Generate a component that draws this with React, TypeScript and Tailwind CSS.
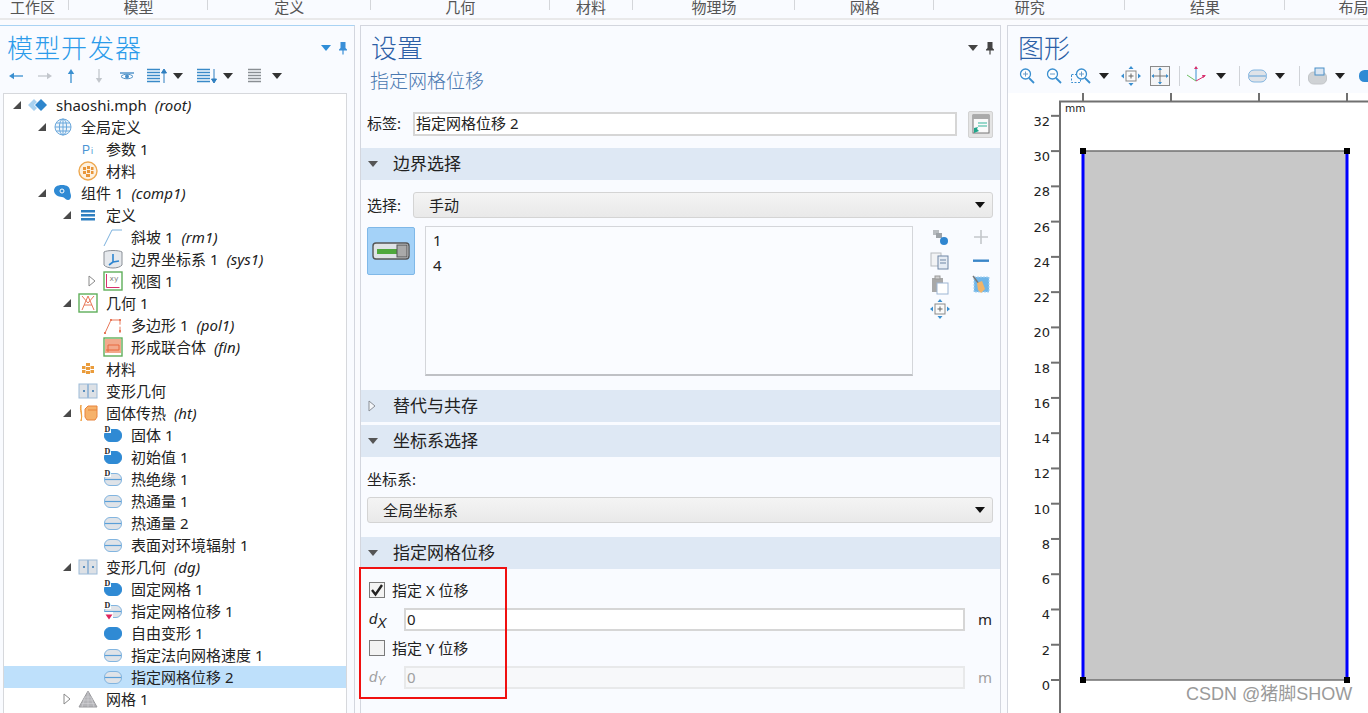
import React from "react";

const sans = "font-['Noto_Sans','Noto_Sans_CJK_SC',sans-serif]";

const Caret = ({ c = "#333", w = 10 }: { c?: string; w?: number }) => (
  <svg width={w} height={6} viewBox="0 0 10 6"><path d="M0 0h10L5 6z" fill={c} /></svg>
);

const Pin = () => (
  <svg width="10" height="14" viewBox="0 0 10 14">
    <path d="M2.5 1h5v6l1.5 1.5v1H1v-1L2.5 7z" fill="currentColor" /><rect x="4.4" y="9" width="1.2" height="4.5" fill="currentColor" />
  </svg>
);

const Tri = ({ open }: { open: boolean }) =>
  open ? (
    <svg width="10" height="10" viewBox="0 0 10 10"><path d="M9 1v8H1z" fill="#4a4a4a" /></svg>
  ) : (
    <svg width="8" height="12" viewBox="0 0 8 12"><path d="M1 1l6 5-6 5z" fill="#fff" stroke="#8a8a8a" /></svg>
  );

const S = ({ children, w = 20, h = 20 }: { children: React.ReactNode; w?: number; h?: number }) => (
  <svg width={w} height={h} viewBox={`0 0 ${w} ${h}`}>{children}</svg>
);

const Pill = ({ fill = "#dfe3e8", line = true, d = false, red = false }: { fill?: string; line?: boolean; d?: boolean; red?: boolean }) => (
  <S>
    <rect x="1.5" y="4.5" width="17" height="12" rx="5.5" fill={fill} stroke={fill === "#dfe3e8" ? "#82b5e0" : fill} />
    {line && <path d="M2 10.5h16" stroke="#5a9fd8" strokeWidth="1.2" />}
    {d && <rect x="1" y="0" width="7" height="8" fill="#fff" />}
    {d && <text x="1.5" y="7" fontSize="8" fontWeight="700" fontFamily="Liberation Serif" fill="#222">D</text>}
    {red && <rect x="1" y="11" width="9" height="9" fill="#fff" />}
    {red && <path d="M2.5 13.5h7l-3.5 5z" fill="#e0245e" />}
  </S>
);

const icons: Record<string, React.ReactNode> = {
  root: (
    <S>
      <path d="M0 10l6-6 3 3-3 3 3 3-3 3z" fill="#a9d2f0" /><path d="M7 10l6-6 6 6-6 6z" fill="#2f86cc" />
    </S>
  ),
  globe: (
    <S>
      <circle cx="10" cy="10" r="8" fill="#eef5fb" stroke="#6ba8dc" />
      <ellipse cx="10" cy="10" rx="3.6" ry="8" fill="none" stroke="#6ba8dc" />
      <path d="M2 10h16M3.2 6h13.6M3.2 14h13.6M10 2v16" stroke="#6ba8dc" fill="none" />
    </S>
  ),
  pi: (
    <S>
      <text x="4" y="15" fontSize="12" fontFamily="Liberation Sans" fill="#4a94d4">P</text>
      <text x="13" y="15" fontSize="9" fontFamily="Liberation Sans" fill="#4a94d4">i</text>
    </S>
  ),
  matCircle: (
    <S>
      <circle cx="10" cy="10" r="9" fill="#fdf1e0" stroke="#eea850" strokeWidth="1.4" />
      <path d="M5 6h3v3H5zM9 5h3v3H9zM13 6h2.5v3H13zM5 10h3v3H5zM9 9h3v3H9zM13 10h2.5v3H13zM8 13h4v3H8z" fill="#e8963a" />
    </S>
  ),
  comp: (
    <S>
      <path d="M1 8c0-4 3-6 8-6s8 2 8 6c0 2 1 3 1 5s-1 4-3 4c-3 0-3-3-6-3-4 0-8-3-8-6z" fill="#2f8ad4" />
      <circle cx="9" cy="8" r="2" fill="none" stroke="#fff" />
    </S>
  ),
  defs: (
    <S>
      <path d="M3 5h14v2.6H3zM3 9h14v2.6H3zM3 13h14v2.6H3z" fill="#2f7fc0" />
    </S>
  ),
  ramp: (
    <S>
      <path d="M1 19L9 3h10" stroke="#7cb1dd" fill="none" />
    </S>
  ),
  sys: (
    <S>
      <path d="M1 3c3-2 15-2 18 0v13c-3 4-15 4-18 0z" fill="#e6e9ed" stroke="#8a8f96" />
      <path d="M10 5v8M10 13l-4 3M10 13l6-1" stroke="#2f86d0" strokeWidth="1.6" fill="none" />
    </S>
  ),
  view: (
    <S>
      <rect x="1" y="1" width="18" height="18" fill="#fff" stroke="#5fae5a" strokeWidth="1.4" />
      <text x="6.5" y="10" fontSize="7.5" fontFamily="DejaVu Sans" fill="#888">xy</text>
      <path d="M3.5 3v13.5h13" stroke="#d8306e" fill="none" />
    </S>
  ),
  geom: (
    <S>
      <rect x="1" y="1" width="18" height="18" fill="#fff" stroke="#5fae5a" strokeWidth="1.4" />
      <path d="M4 17L10 3l6 14M6 12h8M4 3l6 7 6-7" stroke="#e8785a" fill="none" />
    </S>
  ),
  poly: (
    <S>
      <path d="M2 18L8 5h9v13" stroke="#e8785a" strokeDasharray="13 2" fill="none" />
      <path d="M1 17h2v2H1zM7 4h2v2H7zM16 4h2v2h-2zM16 15h2v2h-2z" fill="#e8785a" />
    </S>
  ),
  union: (
    <S>
      <rect x="1" y="1" width="18" height="18" fill="#fff" stroke="#5fae5a" strokeWidth="1.4" />
      <rect x="2" y="2" width="16" height="14" fill="#f2a98c" />
      <path d="M5 15V8h11v5H3" stroke="#e8683f" fill="none" />
    </S>
  ),
  mat: (
    <S>
      <path d="M8 4h4v3H8zM4 7h3.5v3H4zM12.5 7H16v3h-3.5zM8 8h4v3H8zM4 11h3.5v3H4zM12.5 11H16v3h-3.5zM8 12h4v3H8z" fill="#ea9c3c" />
    </S>
  ),
  deform: (
    <S>
      <rect x="1" y="3" width="8.5" height="14" fill="#dde1e6" stroke="#9dbbd8" />
      <rect x="10.5" y="3" width="8.5" height="14" fill="#dde1e6" stroke="#9dbbd8" />
      <path d="M5 9h2v2H5zM14 9h2v2h-2z" fill="#5c8fbd" />
    </S>
  ),
  ht: (
    <S>
      <path d="M3 2c-2 5 2 10 0 16M3 2c-.5 6 1.8 10 0 16" stroke="#f0a040" fill="none" />
      <path d="M7 6l3-3h9v11l-2 3H9l-2-3z" fill="#f6b26b" stroke="#e8843c" />
      <path d="M10 7h9" stroke="#e8843c" />
    </S>
  ),
  dfill: <Pill fill="#2f8ad4" line={false} d />,
  dline: <Pill d />,
  line: <Pill />,
  dred: <Pill d red />,
  fill: <Pill fill="#2f8ad4" line={false} />,
  mesh: (
    <S>
      <path d="M10 2l9 16H1z" fill="#b4b4b8" stroke="#9a9a9e" />
      <path d="M7 8l6 0M5 11h10M3.5 14.5h13M10 2v16M7 8l-3 10M13 8l3 10" stroke="#d8d8dc" strokeWidth=".5" fill="none" />
    </S>
  ),
};

type Row = { l: number; t?: "o" | "c"; i: string; n: string; s?: string; sel?: boolean };
const rows: Row[] = [
  { l: 0, t: "o", i: "root", n: "shaoshi.mph", s: "(root)" },
  { l: 1, t: "o", i: "globe", n: "全局定义" },
  { l: 2, i: "pi", n: "参数 1" },
  { l: 2, i: "matCircle", n: "材料" },
  { l: 1, t: "o", i: "comp", n: "组件 1", s: "(comp1)" },
  { l: 2, t: "o", i: "defs", n: "定义" },
  { l: 3, i: "ramp", n: "斜坡 1", s: "(rm1)" },
  { l: 3, i: "sys", n: "边界坐标系 1", s: "(sys1)" },
  { l: 3, t: "c", i: "view", n: "视图 1" },
  { l: 2, t: "o", i: "geom", n: "几何 1" },
  { l: 3, i: "poly", n: "多边形 1", s: "(pol1)" },
  { l: 3, i: "union", n: "形成联合体", s: "(fin)" },
  { l: 2, i: "mat", n: "材料" },
  { l: 2, i: "deform", n: "变形几何" },
  { l: 2, t: "o", i: "ht", n: "固体传热", s: "(ht)" },
  { l: 3, i: "dfill", n: "固体 1" },
  { l: 3, i: "dfill", n: "初始值 1" },
  { l: 3, i: "dline", n: "热绝缘 1" },
  { l: 3, i: "line", n: "热通量 1" },
  { l: 3, i: "line", n: "热通量 2" },
  { l: 3, i: "line", n: "表面对环境辐射 1" },
  { l: 2, t: "o", i: "deform", n: "变形几何", s: "(dg)" },
  { l: 3, i: "dfill", n: "固定网格 1" },
  { l: 3, i: "dred", n: "指定网格位移 1" },
  { l: 3, i: "fill", n: "自由变形 1" },
  { l: 3, i: "line", n: "指定法向网格速度 1" },
  { l: 3, i: "line", n: "指定网格位移 2", sel: true },
  { l: 2, t: "c", i: "mesh", n: "网格 1" },
];

const indent = ["pl-[3px]", "pl-[28px]", "pl-[53px]", "pl-[78px]"];

const TreeRow = ({ r }: { r: Row }) => (
  <div className={`flex items-center h-[22px] shrink-0 text-[15px] text-[#222] whitespace-nowrap ${indent[r.l]} ${r.sel ? "bg-[#bee0fb]" : ""}`}>
    <span className="w-[20px] flex justify-center pr-[1px]">{r.t && <Tri open={r.t === "o"} />}</span>
    <span className="w-[29px] flex pl-[1px]">{icons[r.i]}</span>
    <span>{r.n}</span>
    {r.s && <span className="italic ml-[8px]">{r.s}</span>}
  </div>
);

const Arrow = ({ dir, c }: { dir: "l" | "r" | "u" | "d"; c: string }) => {
  const rot = { l: 180, r: 0, u: -90, d: 90 }[dir];
  return (
    <svg width="16" height="16" viewBox="0 0 16 16">
      <g transform={`rotate(${rot} 8 8)`}>
        <path d="M1 8h12" stroke={c} strokeWidth="1.3" /><path d="M15 8l-5-3.2v6.4z" fill={c} />
      </g>
    </svg>
  );
};

const ListIcon = ({ arrow }: { arrow?: "u" | "d" }) => (
  <svg width="21" height="16" viewBox="0 0 21 16">
    <path d="M1 1.5h13M1 4.5h13M1 7.5h13M1 10.5h13M1 13.5h13" stroke={arrow ? "#3a8ac8" : "#8a8f94"} strokeWidth="1.4" />
    {arrow === "u" && <path d="M18 15V4M15.5 5L18 1l2.5 4z" stroke="#2f7fc0" fill="#2f7fc0" />}
    {arrow === "d" && <path d="M18 1v11M15.5 11l2.5 4 2.5-4z" stroke="#2f7fc0" fill="#2f7fc0" />}
  </svg>
);

const Left = () => (
  <div className="w-[355px] h-full flex flex-col bg-[#f9fbff] border-t border-t-[#a9d3f3] border-r border-r-[#d3d6de]">
    <div className="h-[44px] flex items-center justify-between pl-[7px] pr-[6px] shrink-0">
      <span className="text-[26px] font-light tracking-[1px] text-[#2c9bea]">模型开发器</span>
      <span className="flex items-center gap-[7px] text-[#3a8fd8]"><Caret c="#2f8ed8" /><Pin /></span>
    </div>
    <div className="h-[24px] mt-[-6px] flex items-center pl-[8px] shrink-0">
      <Arrow dir="l" c="#3a8fd0" />
      <span className="ml-[13px]"><Arrow dir="r" c="#c2c6cc" /></span>
      <span className="ml-[10px]"><Arrow dir="u" c="#3a8fd0" /></span>
      <span className="ml-[12px]"><Arrow dir="d" c="#c2c6cc" /></span>
      <span className="ml-[12px]">
        <svg width="16" height="12" viewBox="0 0 16 12"><path d="M1 3h14" stroke="#4a8fc8" strokeWidth="1.4" /><path d="M2 6.5c2-3 10-3 12 0-2 3-10 3-12 0z" fill="#fff" stroke="#4a8fc8" /><circle cx="8" cy="6.5" r="2" fill="#4a8fc8" /></svg>
      </span>
      <span className="ml-[11px]"><ListIcon arrow="u" /></span>
      <span className="ml-[6px]"><Caret /></span>
      <span className="ml-[13px]"><ListIcon arrow="d" /></span>
      <span className="ml-[6px]"><Caret /></span>
      <span className="ml-[14px]"><ListIcon /></span>
      <span className="ml-[4px]"><Caret /></span>
    </div>
    <div className="ml-[3px] mr-[7px] mt-[5px] flex-1 min-h-0 flex flex-col bg-white border border-[#d6d8dc] border-b-0 overflow-hidden">
      {rows.map((r, i) => <TreeRow key={i} r={r} />)}
    </div>
  </div>
);

const Section = ({ title, open = true }: { title: string; open?: boolean }) => (
  <div className="h-[32px] shrink-0 flex items-center bg-[#dee8f4] text-[17px] text-[#222]">
    <span className="w-[32px] pl-[7px] flex">
      {open ? <Caret c="#555" /> : <svg width="8" height="12" viewBox="0 0 8 12"><path d="M1 1l6 5-6 5z" fill="#f4f6f9" stroke="#8a8f96" /></svg>}
    </span>
    <span>{title}</span>
  </div>
);

const Dropdown = ({ text, cls }: { text: string; cls: string }) => (
  <div className={`h-[26px] flex items-center justify-between rounded-[3px] border border-[#d4d4d4] bg-gradient-to-b from-[#f4f4f4] to-[#e9e9e9] text-[15px] text-[#222] pr-[7px] ${cls}`}>
    <span>{text}</span><Caret c="#111" />
  </div>
);

const BoundaryBtn = () => (
  <div className="w-[48px] h-[48px] shrink-0 flex items-center justify-center rounded-[2px] bg-[#a4d2f8] border border-[#7fb8e8]">
    <svg width="38" height="20" viewBox="0 0 38 20">
      <rect x="1" y="2" width="36" height="16" rx="3" fill="#dfe3e6" stroke="#555" strokeWidth="1.4" />
      <rect x="5" y="8" width="20" height="5" fill="#4fa83d" />
      <rect x="25" y="4" width="10" height="12" fill="#a9a9a9" stroke="#555" />
    </svg>
  </div>
);

const SideIcons = () => (
  <div className="grid grid-cols-[24px_24px] gap-x-[17px] ml-[15px] mt-[-1px] content-start">
    <div className="h-[24px] flex items-center justify-center">
      <S w={18} h={18}><path d="M2 2h6v5H2z" fill="#b8bcc0" /><path d="M5 5h6v5H5z" fill="#9ea3a8" /><circle cx="13" cy="13" r="4" fill="#2f86d0" /></S>
    </div>
    <div className="h-[24px] flex items-center justify-center">
      <S w={16} h={16}><path d="M8 1v14M1 8h14" stroke="#c4c7cb" strokeWidth="1.6" /></S>
    </div>
    <div className="h-[24px] flex items-center justify-center">
      <S w={20} h={18}><rect x="1" y="1" width="10" height="13" fill="#f2f3f5" stroke="#b8bcc0" /><rect x="8" y="4" width="10" height="13" fill="#e6ecf4" stroke="#6f86a5" /><path d="M10 8h6M10 11h6" stroke="#6f86a5" /></S>
    </div>
    <div className="h-[24px] flex items-center justify-center">
      <S w={16} h={6}><rect x="0" y="1.5" width="16" height="2.4" fill="#3a86c8" /></S>
    </div>
    <div className="h-[24px] flex items-center justify-center">
      <S w={18} h={20}><rect x="1" y="3" width="11" height="14" fill="#a8a8a8" /><rect x="4" y="1" width="5" height="3" fill="#d0d0d0" stroke="#999" /><rect x="6" y="8" width="11" height="11" fill="#fff" stroke="#9db6d4" /></S>
    </div>
    <div className="h-[24px] flex items-center justify-center">
      <S w={18} h={20}><rect x="2" y="2" width="15" height="15" fill="#6fb5e8" stroke="#a8d2f0" strokeDasharray="2 1" /><path d="M1 1l6 8" stroke="#777" strokeWidth="1.4" /><path d="M5 8l5-2 3 8-4 4-3-3z" fill="#f2b468" /></S>
    </div>
    <div className="h-[24px] flex items-center justify-center">
      <MoveIcon />
    </div>
    <div />
  </div>
);

const MoveIcon = () => (
  <S w={20} h={20}>
    <rect x="5" y="5" width="10" height="10" fill="#fafafa" stroke="#8a8a8a" />
    <path d="M10 7.5v5M7.5 10h5" stroke="#666" />
    <path d="M10 0l2.5 3h-5zM10 20l2.5-3h-5zM0 10l3-2.5v5zM20 10l-3-2.5v5z" fill="#3a8fd0" />
  </S>
);

const Field = ({ v, disabled }: { v: string; disabled?: boolean }) => (
  <div className={`w-[561px] h-[23px] flex items-center pl-[1px] text-[15px] border-2 ${disabled ? "bg-[#f7f8fa] border-[#e8e9ea] text-[#a0a0a0]" : "bg-white border-[#d6d6d6] text-[#222]"}`}>{v}</div>
);

const Check = ({ on }: { on?: boolean }) => (
  <span className="w-[16px] h-[16px] bg-[#f3f3f3] border border-[#7a7a7a] flex items-center justify-center">
    {on && <svg width="14" height="14" viewBox="0 0 14 14"><path d="M2 7l3.5 4.5L12 2" fill="none" stroke="#222" strokeWidth="2.4" /></svg>}
  </span>
);

const Center = () => (
  <div className="relative w-[641px] h-full ml-[5px] flex flex-col bg-[#f9fbff] border-t border-t-[#d3d6de] border-x border-x-[#d3d6de]">
    <div className="h-[44px] flex items-center justify-between pl-[10px] pr-[5px] shrink-0">
      <span className="text-[26px] font-light text-[#2c5fa6]">设置</span>
      <span className="flex items-center gap-[7px] text-[#444]"><Caret c="#444" /><Pin /></span>
    </div>
    <div className="h-[22px] flex items-center pl-[9px] text-[19px] font-light text-[#4a78b0] shrink-0">指定网格位移</div>
    <div className="h-[28px] mt-[18px] flex items-center shrink-0 pl-[6px] text-[15px] text-[#222]">
      <span className="w-[46px] mt-[-2px]">标签:</span>
      <div className="w-[544px] h-[24px] flex items-center pl-[1px] bg-white border-2 border-[#d6d6d6]"><span className="mt-[-2px]">指定网格位移 2</span></div>
      <div className="ml-[11px] w-[25px] h-[27px] flex items-center justify-center rounded-[2px] bg-[#e4e4e4] border border-[#d2d2d2]">
        <svg width="18" height="20" viewBox="0 0 18 20"><rect x="1" y="1" width="16" height="18" fill="#fafafa" stroke="#777" /><rect x="1" y="1" width="16" height="4" fill="#aaa" /><path d="M6 9h9M6 12h9" stroke="#35b59a" /><path d="M2 19v-5l4-1-1 2 2 2z" fill="#1fa58a" /></svg>
      </div>
    </div>
    <div className="mt-[10px]"><Section title="边界选择" /></div>
    <div className="h-[26px] mt-[12px] flex items-center shrink-0 pl-[6px] text-[15px] text-[#222]">
      <span className="w-[46px]">选择:</span>
      <Dropdown text="手动" cls="w-[580px] pl-[15px]" />
    </div>
    <div className="h-[150px] mt-[8px] flex shrink-0 pl-[6px]">
      <div className="pt-[1px]"><BoundaryBtn /></div>
      <div className="ml-[10px] w-[488px] h-[150px] bg-[#fafcff] border border-[#d4d6da] border-b-2 border-b-[#bfc1c5] pl-[7px] pt-[1px] text-[15px] text-[#222] leading-[25px]">
        <div>1</div>
        <div>4</div>
      </div>
      <SideIcons />
    </div>
    <div className="mt-[14px]"><Section title="替代与共存" open={false} /></div>
    <div className="mt-[3px]"><Section title="坐标系选择" /></div>
    <div className="h-[18px] mt-[13px] mb-[1px] flex items-center pl-[6px] text-[15px] text-[#222] shrink-0">坐标系:</div>
    <div className="mt-[8px] pl-[6px] shrink-0">
      <Dropdown text="全局坐标系" cls="w-[626px] pl-[15px]" />
    </div>
    <div className="mt-[14px]"><Section title="指定网格位移" /></div>
    <div className="h-[20px] mt-[11px] flex items-center gap-[7px] pl-[8px] text-[15px] text-[#222] shrink-0"><Check on /><span>指定 X 位移</span></div>
    <div className="h-[23px] mt-[8px] flex items-center pl-[8px] text-[15px] text-[#222] shrink-0">
      <span className="w-[35px] italic text-[15px] font-['Liberation_Sans',sans-serif]">d<sub className="text-[14px]">X</sub></span>
      <Field v="0" />
      <span className="ml-[13px]">m</span>
    </div>
    <div className="h-[20px] mt-[7px] flex items-center gap-[7px] pl-[8px] text-[15px] text-[#222] shrink-0"><Check /><span>指定 Y 位移</span></div>
    <div className="h-[23px] mt-[8px] flex items-center pl-[8px] text-[15px] text-[#a0a0a0] shrink-0">
      <span className="w-[35px] italic text-[15px] font-['Liberation_Sans',sans-serif]">d<sub className="text-[12px]">Y</sub></span>
      <Field v="0" disabled />
      <span className="ml-[13px]">m</span>
    </div>
    <div className="absolute left-[-2px] top-[541px] w-[148px] h-[132px] border-[2.5px] border-[#f01010]" />
  </div>
);

const Zoom = ({ sign, box }: { sign: string; box?: boolean }) => (
  <svg width={box ? 20 : 16} height="16" viewBox={box ? "-4 0 20 16" : "0 0 16 16"}>
    {box && <rect x="-3.5" y="6.5" width="9" height="8" fill="none" stroke="#3a8fd0" strokeDasharray="2 1.5" />}
    <circle cx="6.5" cy="6" r="5" fill="#fff" stroke="#3a8fd0" strokeWidth="1.3" />
    <path d="M10 10l5 5" stroke="#3a8fd0" strokeWidth="1.8" />
    <path d={sign === "+" ? "M4 6h5M6.5 3.5v5" : "M4 6h5"} stroke="#6a9cc8" />
  </svg>
);

const Sep = () => <span className="w-px h-[20px] bg-[#d0d3d8]" />;

const GraphicsBar = () => (
  <div className="h-[24px] mt-[-6px] mb-[5px] flex items-center pl-[11px] shrink-0 overflow-hidden [&>*]:shrink-0">
    <Zoom sign="+" />
    <span className="ml-[11px] flex"><Zoom sign="-" /></span>
    <span className="ml-[9px] flex"><Zoom sign="+" box /></span>
    <span className="ml-[8px]"><Caret c="#222" /></span>
    <span className="ml-[12px] flex"><MoveIcon /></span>
    <span className="ml-[9px] flex">
      <svg width="20" height="20" viewBox="0 0 20 20"><rect x=".5" y=".5" width="19" height="19" fill="#f4f5f7" stroke="#8a8a8a" /><path d="M10 2v16M2 10h16" stroke="#777" /><path d="M10 1.5l2 2.5H8zM10 18.5l2-2.5H8zM1.5 10L4 8v4zM18.5 10L16 8v4z" fill="#3a8fd0" /></svg>
    </span>
    <span className="ml-[9px] flex"><Sep /></span>
    <span className="ml-[5px] flex">
      <svg width="22" height="20" viewBox="0 0 22 20"><path d="M11 15V1" stroke="#3a8fd0" /><path d="M11 15L2 9" stroke="#6bbf60" /><path d="M11 15l9-5" stroke="#d8306e" /><path d="M11 0l2 3H9zM21 9l-3 3-1-3z" fill="#d8306e" /></svg>
    </span>
    <span className="ml-[9px]"><Caret c="#222" /></span>
    <span className="ml-[13px] flex"><Sep /></span>
    <span className="ml-[8px] flex">
      <svg width="20" height="14" viewBox="0 0 20 14"><rect x=".5" y="1" width="18" height="12" rx="5.5" fill="#dfe3e8" stroke="#82b5e0" /><path d="M1 7h17" stroke="#5a9fd8" /></svg>
    </span>
    <span className="ml-[7px]"><Caret c="#222" /></span>
    <span className="ml-[14px] flex"><Sep /></span>
    <span className="ml-[8px] flex">
      <svg width="20" height="18" viewBox="0 0 20 18"><rect x=".5" y="5" width="18" height="12" rx="5" fill="#cfd2d5" stroke="#c2c5c8" /><rect x="7" y="1" width="9" height="7" fill="#dbe6f2" stroke="#4a8fc8" /></svg>
    </span>
    <span className="ml-[7px]"><Caret c="#222" /></span>
    <span className="ml-[14px] flex">
      <svg width="20" height="14" viewBox="0 0 20 14"><rect x="0" y="1" width="20" height="12" rx="5.5" fill="#2f8ad4" /></svg>
    </span>
  </div>
);

const ticks = Array.from({ length: 17 }, (_, i) => i * 2);

const Plot = () => (
  <svg className="flex-1 block" viewBox="1008 93 360 620" width="360" height="620">
    <rect x="1008" y="93" width="360" height="620" fill="#fff" />
    <path d="M1060 713V101.5H1368" stroke="#707070" strokeWidth="2" fill="none" />
    {[1083, 1171, 1259, 1347].map((x) => (
      <path key={x} d={`M${x} 93v8`} stroke="#707070" strokeWidth="2" />
    ))}
    {ticks.map((t) => {
      const y = 680 - t * 17.63;
      return (
        <g key={t}>
          <path d={`M1051 ${y}h9`} stroke="#707070" strokeWidth="2" />
          <text x="1050" y={y + 10} textAnchor="end" fontSize="13" fontFamily="DejaVu Sans" fill="#222">{t}</text>
        </g>
      );
    })}
    <text x="1065" y="112" fontSize="10.5" fontFamily="DejaVu Sans" fill="#222">mm</text>
    <rect x="1083" y="151" width="264" height="529" fill="#c8c8c8" />
    <path d="M1083 151h264M1083 680h264" stroke="#707070" strokeWidth="1.5" />
    <path d="M1083 151v529M1347 151v529" stroke="#0000ff" strokeWidth="3" />
    {[[1083, 151], [1347, 151], [1083, 680], [1347, 680]].map(([x, y]) => (
      <rect key={`${x}${y}`} x={x - 3} y={y - 3} width="6" height="6" fill="#000" />
    ))}
  </svg>
);

const Right = () => (
  <div className="relative flex-1 h-full ml-[6px] flex flex-col bg-[#f9fbff] border-t border-t-[#d3d6de] border-l border-l-[#d3d6de] overflow-hidden">
    <div className="h-[44px] flex items-center pl-[10px] text-[26px] font-light text-[#2c5fa6] shrink-0">图形</div>
    <GraphicsBar />
    <Plot />
    <div className="absolute left-[178px] top-[656px] text-[18px] leading-[24px] text-[#9a9a9a] font-['Liberation_Sans','Noto_Sans_CJK_SC',sans-serif] whitespace-nowrap">CSDN @猪脚SHOW</div>
  </div>
);

const tabs: [string, string][] = [
  ["工作区", "w-[69px] pr-[4px]"],
  ["模型", "w-[139px]"],
  ["定义", "w-[163px]"],
  ["几何", "w-[179px]"],
  ["材料", "w-[83px]"],
  ["物理场", "w-[163px]"],
  ["网格", "w-[139px]"],
  ["研究", "w-[191px]"],
  ["结果", "w-[160px]"],
  ["布局", "w-[83px] pl-[54px]"],
];

export default function App() {
  return (
    <div className={`w-[1368px] h-[713px] flex flex-col overflow-hidden bg-[#fafbfe] ${sans}`}>
      <div className="h-[20px] shrink-0 flex items-start border-b-2 border-b-[#e9e9ea] bg-[#f9fbff] overflow-hidden">
        {tabs.map(([t, c], i) => (
          <div key={t} className={`relative h-[17px] flex justify-center text-[15px] leading-[14px] text-[#555] whitespace-nowrap ${c}`}>
            <span>{t}</span>
            {i < 9 && <span className="absolute right-0 top-0 w-px h-[10px] bg-[#d4d6da]" />}
          </div>
        ))}
      </div>
      <div className="mt-[5px] flex-1 flex min-h-0">
        <Left />
        <Center />
        <Right />
      </div>
    </div>
  );
}
